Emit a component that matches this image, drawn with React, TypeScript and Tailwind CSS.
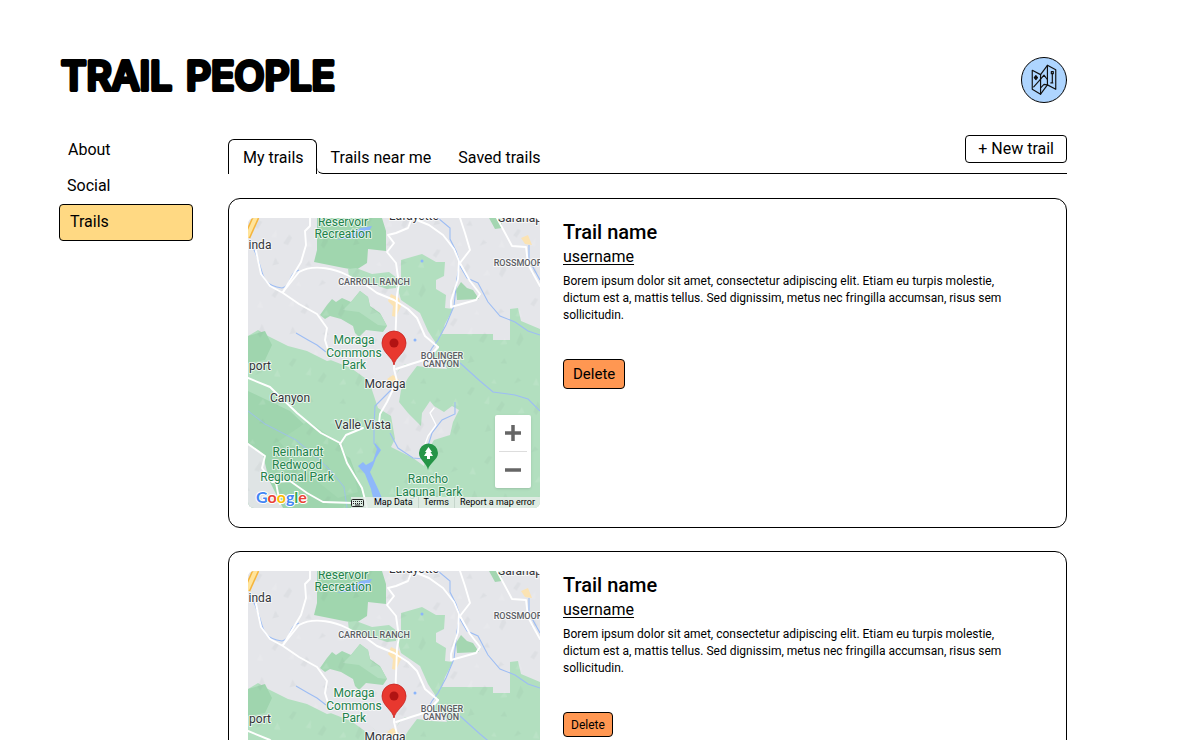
import { useId } from "react";

function Brand() {
  return (
    <h1>
      <svg viewBox="0 0 290 52" className="h-[52px] w-[290px] overflow-visible" aria-label="Trail People">
        <text
          y="39"
          fontSize="39"
          fontWeight="500"
          fontFamily="Inter, sans-serif"
          fill="#000"
          stroke="#000"
          strokeWidth="4"
          strokeLinejoin="round"
        >
          <tspan x="2">TRAIL</tspan>
          <tspan x="127">PEOPLE</tspan>
        </text>
      </svg>
    </h1>
  );
}

function Avatar() {
  return (
    <button type="button" aria-label="Account" className="block size-[46px] rounded-full">
      <svg viewBox="0 0 47 47" fill="none" stroke="#111" strokeWidth="1.2" strokeLinejoin="round" strokeLinecap="round">
        <circle cx="23.5" cy="23.5" r="23" fill="#aed5ff" stroke="#000" strokeWidth="1" />
        <path d="M11.500 13.500 L20 18 L27 8.500 L35.500 13 V33 L27 28.500 L20 38 L11.500 33 Z" />
        <path d="M20 18 V38 M27 8.500 V28.500" />
        <path d="M13 30.500 L18 25 L23.500 18.500 L26.500 22.500 M20.500 31 L23.500 28 L27 28.500" />
        <path d="M15.200 19 L16.800 21 L15.200 23 L13.600 21 Z" fill="#111" />
        <path d="M32 17 V26 M31 15 H33 V17 H31 Z M30.500 26.500 H32.500" />
      </svg>
    </button>
  );
}

type LabelProps = { x: number; y: number; size: number; tone?: string; weight?: number; children: string };

function MapLabel({ x, y, size, tone = "#333438", weight = 400, children }: LabelProps) {
  return (
    <text
      x={x}
      y={y}
      fontSize={size}
      fontWeight={weight}
      fill={tone}
      stroke="#fff"
      strokeOpacity="0.7"
      strokeWidth="2"
      paintOrder="stroke"
      textAnchor="middle"
      strokeLinejoin="round"
    >
      {children}
    </text>
  );
}

const park = "#23824b";
const minor = "#5b5d63";

function TrailMap() {
  const grain = useId();
  return (
    <div className="relative h-[290px] w-[292px] shrink-0 overflow-hidden rounded-md bg-[#e5e6ea]">
      <svg viewBox="0 0 292 290" className="h-full w-full" fontFamily="Roboto, sans-serif" role="img" aria-label="Map of Moraga">
        <defs>
          <pattern id={grain} width="83" height="71" patternUnits="userSpaceOnUse" patternTransform="rotate(-14)">
            <path
              d="M4 10 l6 -5 3 2 -6 6z M28 33 l8 -7 2 4 -6 6z M52 12 l5 -5 3 4z M12 52 l5 -7 2 7z M64 44 l7 -9 1 7 -6 6z M44 60 l5 -4 1 6z"
              fill="#4c6b5c"
              fillOpacity="0.05"
            />
            <path d="M18 24 l7 -6 -2 8z M48 42 l6 -5 1 6z M70 18 l5 -6 1 8z M30 6 l4 -3 1 5z" fill="#fff" fillOpacity="0.1" />
          </pattern>
        </defs>
        <rect width="292" height="290" fill="#e5e6ea" />
        <path d="M69 0 H134 L138 13 V33 L120 31 L119 45 L108 52 L96 50 L66 44 L69 32 Z" fill="#a0d6ae" />
        <path d="M100 51 L108 50 L124 56 L141 54 L149 60 L148 70 L139 71 L127 67 L111 65 L101 59 Z" fill="#b3dfc0" />
        <path d="M72 97 L79 87 L84 81 L88 84 L94 80 L103 84 L112 73 L120 79 L122 88 L132 95 L139 108 L135 114 L118 112 L111 119 L107 115 L105 108 L93 101 L82 98 L77 101 Z" fill="#a5d8b3" />
        <path d="M103 84 L112 73 L120 79 L122 89 L133 97 L139 108 L130 107 L111 94 L95 92 Z" fill="#b4dfc1" />
        <path d="M153 42 L174 36 L188 44 L197 44 L196 58 L188 62 L188 71 L198 77 L197 90 L205 91 L197 106 L194 116 H245 V122 H262 V91 L270 90 L273 103 L292 111 V290 H119 L0 246 V118 L10 112 L20 118 L40 128 L59 133 L79 143 L93 140 L103 148 L115 150 L126 158 L138 178 L143 175 L150 153 L157 146 L178 145 L191 130 L180 113 L172 95 L153 82 L149 68 L153 61 Z" fill="#b2dfbf" />
        <path d="M0 118 L17 113 L24 127 L17 142 L0 145 Z M0 173 L42 193 L76 225 L102 240 L120 290 H0 Z" fill="#9fd5ae" />
        <path d="M60 203 L92 226 L104 248 L110 274 L90 280 L55 252 L31 223 Z" fill="#a5d9b3" />
        <path d="M208 72 L213 64 L219 70 L225 72 L231 81 L209 82 Z M241 0 H253 L254 10 L247 11 Z" fill="#a4d6b1" />
        <path d="M158 104 L172 112 L189 130 L178 144 L150 147 L146 160 L138 168 L129 161 L119 151 L140 150 L146 120 Z" fill="#e5e6ea" />
        <path d="M80 141 L93 137 L107 143 L119 151 L129 161 L137 165 L146 159 L155 147 L170 144 L182 139 L196 143 L199 151 L184 150 L169 148 L160 160 L153 172 L151 184 L160 195 L173 208 L174 195 L182 183 L186 188 L196 194 L204 188 L211 192 L205 204 L202 217 L186 222 L178 236 L176 248 L165 240 L143 229 L147 221 L143 198 L130 190 L121 163 L103 150 Z" fill="#e4e5e9" />
        <path d="M0 225 L15 237 L21 262 L35 290 H0 Z" fill="#dfe4e5" />
        <rect width="292" height="290" fill={`url(#${grain})`} />

        <path d="M89 22 L105 14 L113 10 L124 8 L119 17 L109 20 L95 21 Z" fill="#8bb5fb" />
        <path d="M126 226 L129 231 L125 243 L118 247 L115 244 L110 248 L117 256 L123 271 L126 284 L138 290 L131 273 L122 254 L125 248 L128 240 L133 232 L127 225 Z" fill="#8fb8fa" />
        <g fill="none" stroke="#9dbdf4" strokeWidth="1.1">
          <path d="M5 30 C18 54 9 66 34 70 C45 67 39 56 51 52" />
          <path d="M190 0 L202 10 L202 21 L208 33 L212 45 L209 60 L206 88 L198 107 L190 122 L184 130 L179 139" />
          <path d="M212 48 L219 60 L230 65 L240 84 L252 98 L267 104 L280 113 L292 117" />
          <path d="M281 27 V42 L292 62 M48 115 L60 122 L69 127 L78 134" />
          <path d="M0 193 L17 206 L48 222 L69 240 L84 254 L96 269 L99 290" opacity="0.7" />
          <path d="M142 215 L150 230 L165 240 L176 241 L184 215 L194 202 L207 196 L207 184" />
          <path d="M212 145 L232 163 L245 174 L267 177 L280 181 L292 193" />
          <path d="M126 226 V209 L127 188 L143 172" />
        </g>
        <path d="M143 76 L151 80 L153 88 L148 99 L144 98 L145 88 L140 83 Z M139 161 L145 157 L151 162 L146 167 Z M273 20 L280 17 L284 27 L277 26 Z" fill="#fbe3b3" />
        <circle cx="167" cy="122" r="1.5" fill="#8bb5fb" />
        <circle cx="174" cy="43" r="1.5" fill="#8bb5fb" />
        <g fill="none" stroke="#fff" strokeWidth="1.9" strokeLinejoin="round" strokeLinecap="round">
          <path d="M62 0 V8 L57 13 L58 27 L53 44 L35 74" />
          <path d="M8 33 L13 56 L22 68 L35 75 L51 86 L69 96 L79 110 L77 122 L81 135" />
          <path d="M35 74 L51 54 C67 45 89 52 99 57 L118 67 L129 75 L146 82 L160 91 L169 100 L177 118 L190 129" />
          <path d="M164 0 L160 10 L148 15 L140 17 L146 25 L139 34 L148 45 L151 66 L149 77 L148 104 L146 151 L149 163 L139 184 L132 196 L131 205" />
          <path d="M164 0 L181 7 L195 17 L206 31 L211 43 L210 61 L203 83 L203 89 L228 82 L232 76 L222 63 L212 45 L222 32 L217 15 L212 0" />
          <path d="M0 160 L22 169 L49 195 L73 215 L92 225 L99 245 L114 270 L119 290" />
          <path d="M92 226 L98 217 L115 210 M249 0 L264 28 L278 29 L280 46 L287 59 L292 68" />
          <path d="M0 226 L17 238 L14 250 L24 264 L42 263 L59 275 L75 284 L106 285" />
          <path d="M148 151 L163 146 L179 141 L190 129 M28 265 L32 286" />
          <path d="M173 237 L180 218 L188 207 L182 195 L186 190" strokeWidth="1.3" />
        </g>
        <path d="M-1 19 L8 -1" stroke="#f5b53d" strokeWidth="7" />
        <path d="M-1 19 L8 -1" stroke="#ffe49b" strokeWidth="4" />

        <MapLabel x={95} y={8} size={12} tone={park}>Reservoir</MapLabel>
        <MapLabel x={95} y={20} size={12} tone={park}>Recreation</MapLabel>
        <MapLabel x={166} y={2} size={12}>Lafayette</MapLabel>
        <MapLabel x={272} y={4} size={12}>Saranap</MapLabel>
        <MapLabel x={12} y={31} size={12}>inda</MapLabel>
        <MapLabel x={12} y={152} size={12}>port</MapLabel>
        <MapLabel x={126} y={67} size={9} tone={minor} weight={500}>CARROLL RANCH</MapLabel>
        <MapLabel x={270} y={48} size={9} tone={minor} weight={500}>ROSSMOOR</MapLabel>
        <MapLabel x={106} y={126} size={12} tone={park}>Moraga</MapLabel>
        <MapLabel x={106} y={139} size={12} tone={park}>Commons</MapLabel>
        <MapLabel x={106} y={151} size={12} tone={park}>Park</MapLabel>
        <MapLabel x={194} y={141} size={9} tone={minor} weight={500}>BOLINGER</MapLabel>
        <MapLabel x={193} y={149} size={9} tone={minor} weight={500}>CANYON</MapLabel>
        <MapLabel x={137} y={170} size={12}>Moraga</MapLabel>
        <MapLabel x={42} y={184} size={12}>Canyon</MapLabel>
        <MapLabel x={115} y={211} size={12}>Valle Vista</MapLabel>
        <MapLabel x={50} y={238} size={12} tone={park}>Reinhardt</MapLabel>
        <MapLabel x={49} y={251} size={12} tone={park}>Redwood</MapLabel>
        <MapLabel x={49} y={263} size={12} tone={park}>Regional Park</MapLabel>
        <MapLabel x={180} y={265} size={12} tone={park}>Rancho</MapLabel>
        <MapLabel x={181} y={278} size={12} tone={park}>Laguna Park</MapLabel>

        <path d="M146 147 C145 139 134 135 134 125 A12 12 0 0 1 158 125 C158 135 147 139 146 147 Z" fill="#e8382f" stroke="#c5221f" strokeWidth="0.8" />
        <circle cx="146" cy="125" r="4.5" fill="#b11313" />
        <path d="M180 252 C179 245 171 242 171 235 A9.3 9.3 0 0 1 190 235 C190 242 181 245 180 252 Z" fill="#259447" />
        <path d="M180.500 229 L184 234 H182.500 L185 238 H182 V241 H179 V238 H176 L178.500 234 H177 Z" fill="#fff" />

        <text x="8" y="285" fontSize="16" fontFamily="Lato, sans-serif" fontWeight="700" stroke="#fff" strokeWidth="2" paintOrder="stroke">
          <tspan fill="#4285f4">G</tspan>
          <tspan fill="#ea4335">o</tspan>
          <tspan fill="#fbbc05">o</tspan>
          <tspan fill="#4285f4">g</tspan>
          <tspan fill="#34a853">l</tspan>
          <tspan fill="#ea4335">e</tspan>
        </text>
      </svg>

      <div className="absolute right-[9px] bottom-5 flex h-[73px] w-9 flex-col items-center rounded-xs bg-white shadow-sm">
        <button type="button" aria-label="Zoom in" className="flex w-full flex-1 items-center justify-center">
          <svg viewBox="0 0 16 16" className="size-4" stroke="#666" strokeWidth="3.5">
            <path d="M8 0 V16 M0 8 H16" />
          </svg>
        </button>
        <span className="h-px w-7 bg-[#ddd]" />
        <button type="button" aria-label="Zoom out" className="flex w-full flex-1 items-center justify-center">
          <svg viewBox="0 0 16 16" className="size-4" stroke="#666" strokeWidth="3.5">
            <path d="M0 8 H16" />
          </svg>
        </button>
      </div>

      <div className="absolute right-0 bottom-0 flex h-[11px] items-center bg-[#e9eeeb]/80 text-[9px] leading-[11px] whitespace-nowrap text-black">
        <button type="button" aria-label="Keyboard shortcuts" className="mr-[10px]">
          <svg viewBox="0 0 13 8" className="h-2 w-[13px]" fill="none" stroke="#222">
            <rect x="0.500" y="0.500" width="12" height="7" rx="1" />
            <path d="M2 2.500 H11 M2 4.500 H11" strokeDasharray="1 1" />
            <path d="M4 6 H9" />
          </svg>
        </button>
        <a href="#map-data">Map Data</a>
        <a href="#terms" className="ml-[5px] border-l border-[#c5d5cb] pl-[5px]">Terms</a>
        <a href="#report" className="ml-[5px] border-l border-[#c5d5cb] pr-[5px] pl-[5px]">Report a map error</a>
      </div>
    </div>
  );
}

type Trail = { id: number; compact: boolean };

const trails: Trail[] = [
  { id: 1, compact: false },
  { id: 2, compact: true },
];

function TrailCard({ compact }: { compact: boolean }) {
  return (
    <article className="flex gap-[23px] rounded-xl border border-black bg-white p-[19px]">
      <TrailMap />
      <div className="min-w-0 flex-1">
        <h2 className="text-xl leading-7 font-medium">Trail name</h2>
        <a href="#user" className="block text-base leading-[22px] underline underline-offset-2">username</a>
        <p className="mt-[5px] max-w-[450px] text-xs leading-[17px]">
          Borem ipsum dolor sit amet, consectetur adipiscing elit. Etiam eu turpis molestie, dictum est a, mattis tellus.
          Sed dignissim, metus nec fringilla accumsan, risus sem sollicitudin.
        </p>
        <button
          type="button"
          className={
            compact
              ? "mt-[35px] block h-[25px] rounded border border-black bg-[#ff9752] px-[7px] text-xs"
              : "mt-[35px] block h-[30px] rounded border border-black bg-[#ff9752] px-[9px] text-[15px]"
          }
        >
          Delete
        </button>
      </div>
    </article>
  );
}

export default function App() {
  return (
    <div className="min-h-screen bg-white pt-[51px] pr-[133px] pl-[59px] font-['Roboto',sans-serif] text-black">
      <header className="flex items-end justify-between">
        <Brand />
        <Avatar />
      </header>

      <div className="mt-7 flex gap-[35px]">
        <nav aria-label="Main" className="flex w-[134px] shrink-0 flex-col text-base">
          <a href="#about" className="flex h-[37px] items-center px-[9px]">About</a>
          <a href="#social" className="flex h-9 items-center px-2">Social</a>
          <a href="#trails" aria-current="page" className="flex h-[37px] items-center rounded border border-black bg-[#ffd983] px-[10px] pb-[2px]">
            Trails
          </a>
        </nav>

        <main className="min-w-0 flex-1">
          <div className="flex h-[43px] items-end text-base">
            <nav aria-label="Trail lists" className="flex">
              <a href="#mine" aria-current="page" className="flex h-[35px] items-center rounded-t-md border border-b-0 border-black pt-[2px] pr-3 pl-[14px]">
                My trails
              </a>
              <div className="flex h-[35px] items-center gap-[27px] rounded-bl-md border-b border-black pt-1 pl-[14px]">
                <a href="#near">Trails near me</a>
                <a href="#saved">Saved trails</a>
              </div>
            </nav>
            <div className="flex h-[35px] flex-1 items-end justify-end border-b border-black pb-[10px]">
              <button type="button" className="h-7 shrink-0 rounded border border-black bg-white px-3 leading-6">
                + New trail
              </button>
            </div>
          </div>

          <div className="mt-6 flex flex-col gap-[23px] pb-6">
            {trails.map((trail) => (
              <TrailCard key={trail.id} compact={trail.compact} />
            ))}
          </div>
        </main>
      </div>
    </div>
  );
}
